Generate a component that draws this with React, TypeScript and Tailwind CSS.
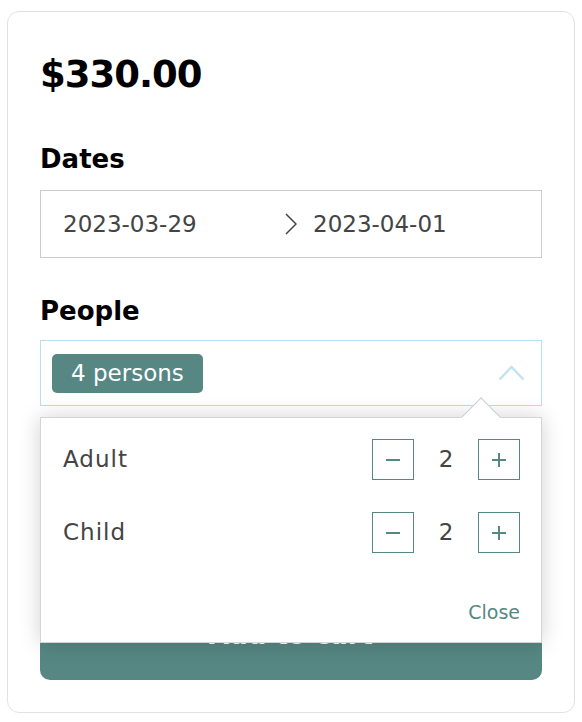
import React from "react";

const teal = "#568783";

const Minus = () => (
  <svg width="16" height="16" viewBox="0 0 16 16" fill="none">
    <line x1="1" y1="8" x2="15" y2="8" stroke={teal} strokeWidth="2" />
  </svg>
);

const Plus = () => (
  <svg width="16" height="16" viewBox="0 0 16 16" fill="none">
    <line x1="1" y1="8" x2="15" y2="8" stroke={teal} strokeWidth="2" />
    <line x1="8" y1="1" x2="8" y2="15" stroke={teal} strokeWidth="2" />
  </svg>
);

const Counter = ({ label, value }: { label: string; value: number }) => (
  <div className="flex h-[41px] items-center justify-between">
    <span className="text-[23px] leading-none tracking-[1px] text-[#444444]">{label}</span>
    <div className="flex items-center">
      <button className="flex h-[41px] w-[42px] items-center justify-center border border-[#568783] bg-white">
        <Minus />
      </button>
      <span className="w-[64px] text-center text-[23px] leading-none text-[#444444]">{value}</span>
      <button className="flex h-[41px] w-[42px] items-center justify-center border border-[#568783] bg-white">
        <Plus />
      </button>
    </div>
  </div>
);

export default function App() {
  return (
    <div className="min-h-screen bg-white px-[7px] pt-[11px] font-['DejaVu_Sans',sans-serif]">
      <div className="rounded-[12px] border border-[#dfe3e6] px-[32px] pt-[44px] pb-[32px]">
        {/* Price */}
        <div className="text-[37px] font-bold leading-[37px] tracking-[-1px] text-black">$330.00</div>

        {/* Dates */}
        <h3 className="mt-[53px] text-[26px] font-bold leading-[26px] text-black">Dates</h3>
        <div className="mt-[18px] flex h-[68px] items-center border border-[#cccccc] pl-[22px] text-[23px] leading-none text-[#444444]">
          <span className="w-[222px]">2023-03-29</span>
          <svg width="12" height="22" viewBox="0 0 12 22" fill="none">
            <polyline points="1,1 11,11 1,21" stroke="#444444" strokeWidth="1.5" />
          </svg>
          <span className="ml-[16px]">2023-04-01</span>
        </div>

        {/* People */}
        <h3 className="mt-[40px] text-[26px] font-bold leading-[26px] text-black">People</h3>
        <div className="relative mt-[16px]">
          <div className="flex h-[66px] items-center justify-between border border-[#b9def0] pl-[11px] pr-[16px]">
            <span className="flex h-[39px] items-center rounded-[5px] bg-[#568783] px-[19px] text-[23px] leading-none text-white">
              4 persons
            </span>
            <svg width="27" height="16" viewBox="0 0 27 16" fill="none">
              <polyline points="1.5,14.5 13.5,2 25.5,14.5" stroke="#c3e3f0" strokeWidth="2.5" />
            </svg>
          </div>

          {/* Dropdown */}
          <div className="absolute left-0 right-0 top-[77px] z-10 border border-[#d4d4d4] bg-white pt-[21px] pb-[20px] pl-[22px] pr-[21px] shadow-[0_0_20px_rgba(0,0,0,0.18)]">
            <div className="absolute left-[426px] top-[-15px] h-[28px] w-[28px] rotate-45 border-l border-t border-[#cccccc] bg-white" />
            <div className="relative">
              <Counter label="Adult" value={2} />
              <div className="mt-[32px]">
                <Counter label="Child" value={2} />
              </div>
              <div className="mt-[50px] flex justify-end">
                <button className="text-[19px] leading-[19px] text-[#568783]">Close</button>
              </div>
            </div>
          </div>
        </div>

        {/* Add to cart */}
        <button className="mt-[190px] flex h-[84px] w-full items-center justify-center rounded-[10px] bg-[#568783] pb-[5px] text-[26px] font-bold text-white">
          Add to cart
        </button>
      </div>
    </div>
  );
}
